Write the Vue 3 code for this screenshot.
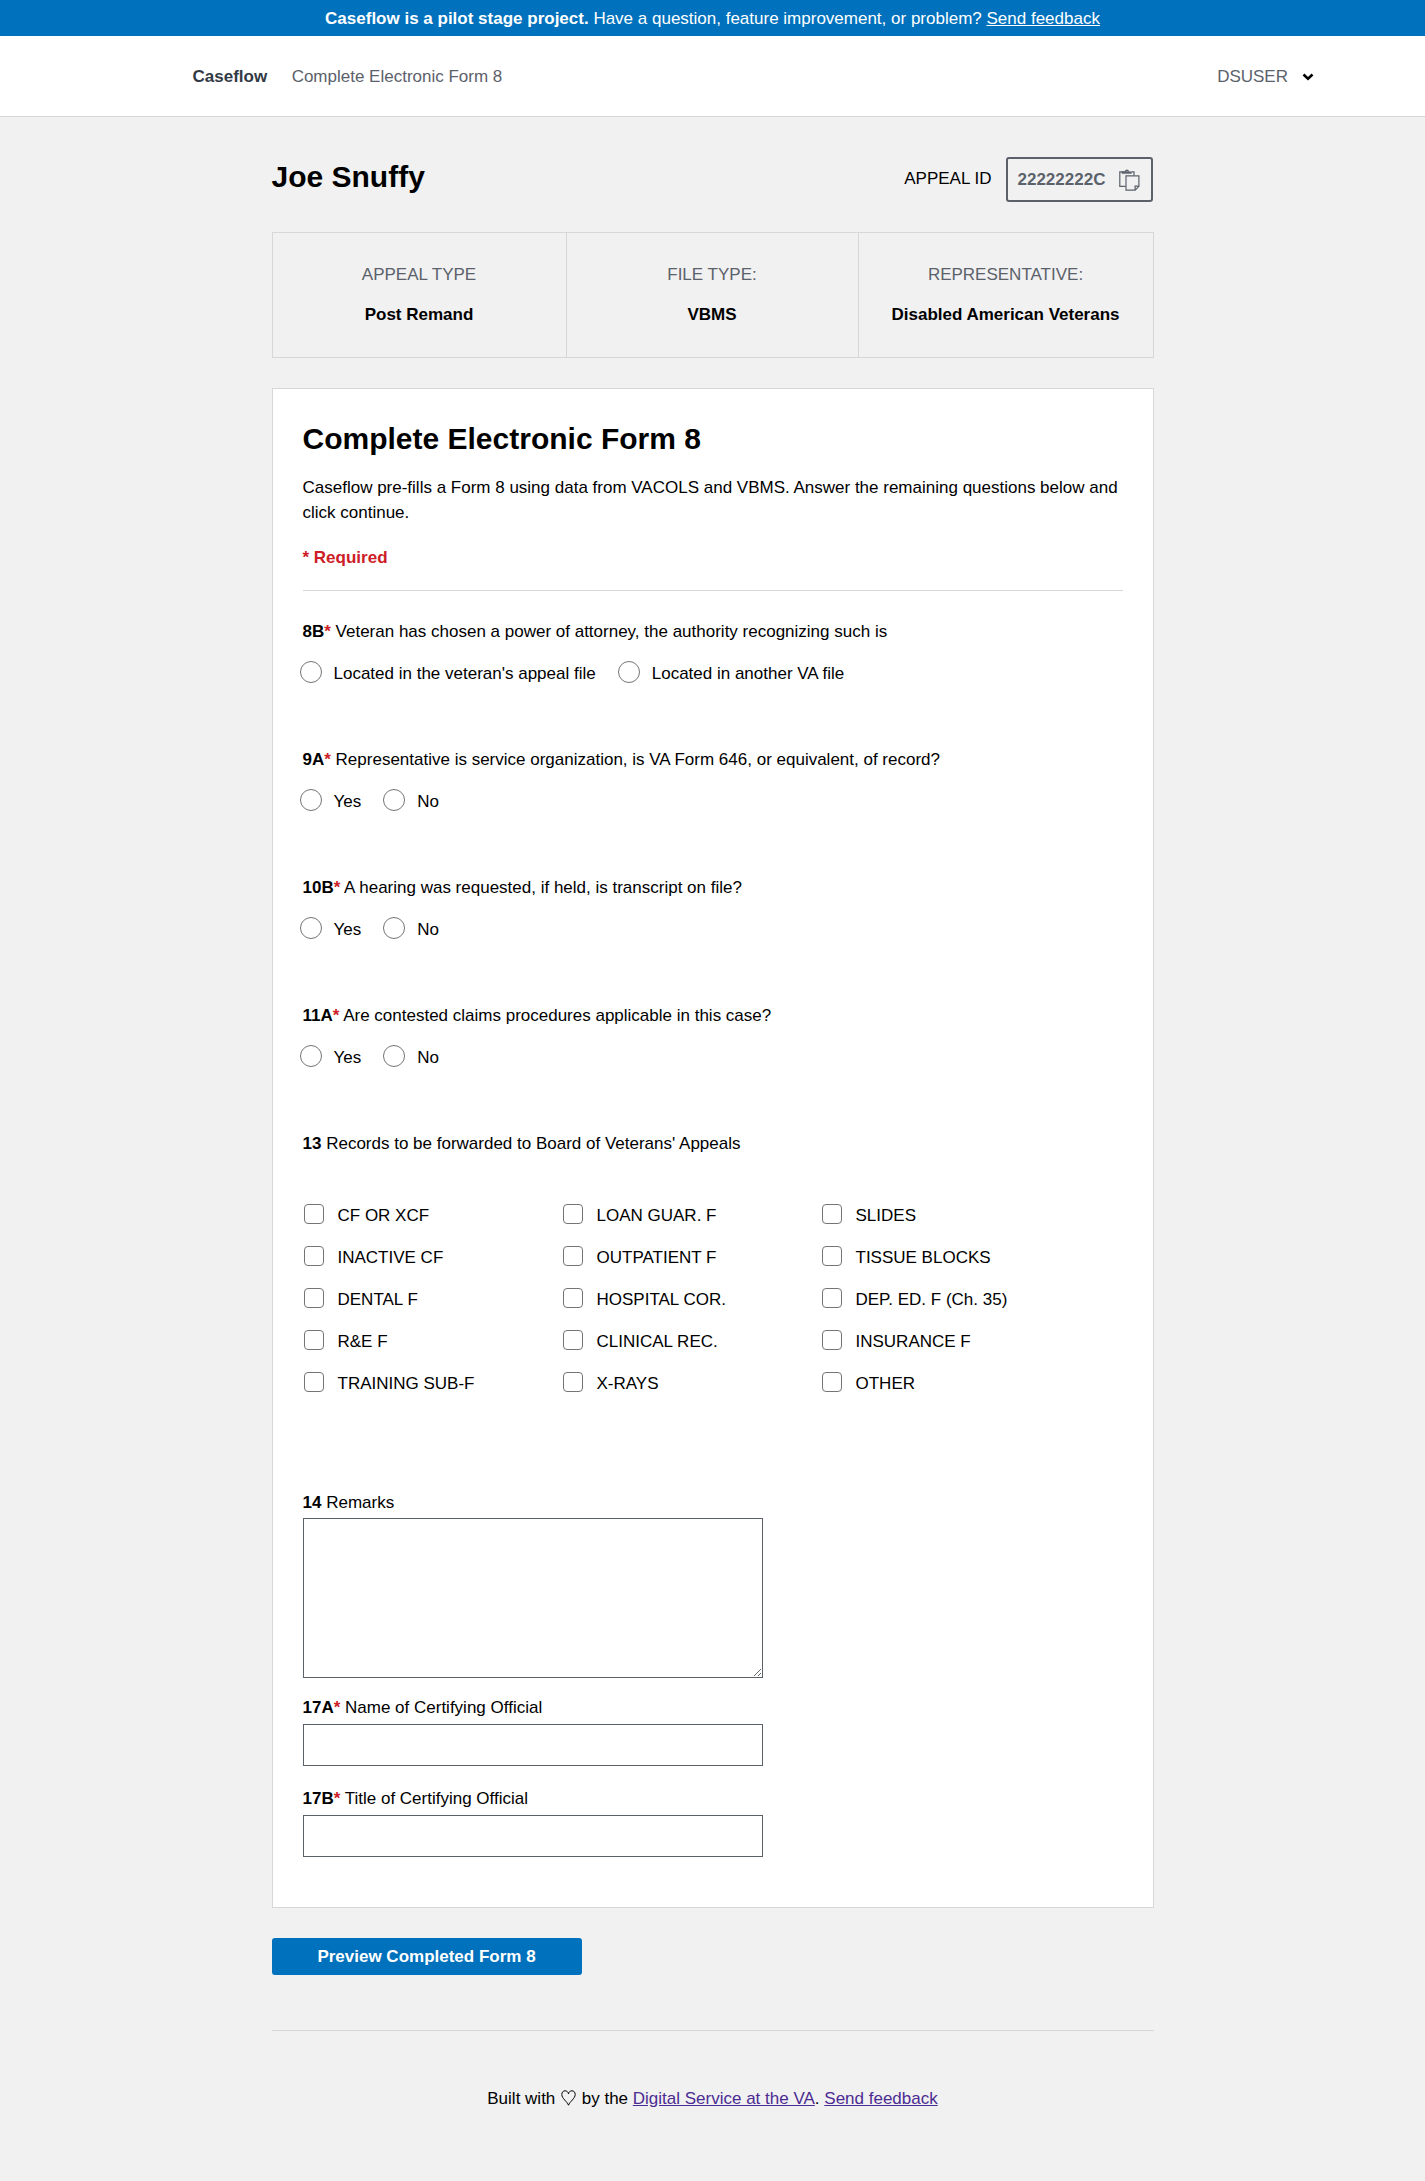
<script setup>
const summary = [
  { label: 'APPEAL TYPE', value: 'Post Remand' },
  { label: 'FILE TYPE:', value: 'VBMS' },
  { label: 'REPRESENTATIVE:', value: 'Disabled American Veterans' },
]
const questions = [
  { id: '8B', text: 'Veteran has chosen a power of attorney, the authority recognizing such is', options: ["Located in the veteran's appeal file", 'Located in another VA file'] },
  { id: '9A', text: 'Representative is service organization, is VA Form 646, or equivalent, of record?', options: ['Yes', 'No'] },
  { id: '10B', text: 'A hearing was requested, if held, is transcript on file?', options: ['Yes', 'No'] },
  { id: '11A', text: 'Are contested claims procedures applicable in this case?', options: ['Yes', 'No'] },
]
const records = [
  'CF OR XCF', 'INACTIVE CF', 'DENTAL F', 'R&E F', 'TRAINING SUB-F',
  'LOAN GUAR. F', 'OUTPATIENT F', 'HOSPITAL COR.', 'CLINICAL REC.', 'X-RAYS',
  'SLIDES', 'TISSUE BLOCKS', 'DEP. ED. F (Ch. 35)', 'INSURANCE F', 'OTHER',
]
</script>

<template>
  <div class="page">
    <div class="banner">
      <strong>Caseflow is a pilot stage project.</strong> Have a question, feature improvement, or problem? <a href="#">Send feedback</a>
    </div>
    <header class="header">
      <nav class="nav">
        <strong class="brand">Caseflow</strong>
        <span>Complete Electronic Form 8</span>
      </nav>
      <div class="user">
        <span>DSUSER</span>
        <svg width="12" height="8" viewBox="0 0 12 8"><path d="M1.500 1.500 6 5.700 10.500 1.500" fill="none" stroke="#000" stroke-width="2.500" /></svg>
      </div>
    </header>

    <main class="content">
      <div class="title-row">
        <h1>Joe Snuffy</h1>
        <div class="appeal">
          <span>APPEAL ID</span>
          <button class="copy" type="button">
            22222222C
            <svg width="21" height="22" viewBox="0 0 21 22" fill="none" stroke="#5b616b" stroke-width="1.2">
              <path d="M6.6 17.4H.8V2.8H3.4M12.4 2.8H15V6.6" />
              <path d="M3.2 4.600V2.800H5.600" />
              <path d="M3.400 4.600V2.700H5.800Q6 .800 7.900 .800T10 2.700H12.400V4.600ZM7.200 2.700H8.600V1.900H7.200Z" fill="#5b616b" fill-rule="evenodd" stroke-width=".4" />
              <path d="M7 6.9H19.9V17.3L16.2 21.2H7ZM19.9 17.2H16.1V21.2" />
            </svg>
          </button>
        </div>
      </div>

      <section class="summary">
        <div v-for="s in summary" :key="s.label" class="cell">
          <span class="cell-label">{{ s.label }}</span>
          <strong>{{ s.value }}</strong>
        </div>
      </section>

      <form class="card">
        <h1>Complete Electronic Form 8</h1>
        <p class="intro">Caseflow pre-fills a Form 8 using data from VACOLS and VBMS. Answer the remaining questions below and click continue.</p>
        <p class="required-note">* Required</p>
        <div class="rule"></div>

        <div v-for="q in questions" :key="q.id" class="question">
          <div class="q-label"><strong>{{ q.id }}<span class="star">*</span></strong> {{ q.text }}</div>
          <div class="options">
            <label v-for="o in q.options" :key="o"><input type="radio" :name="q.id">{{ o }}</label>
          </div>
        </div>

        <div class="q-label"><strong>13</strong> Records to be forwarded to Board of Veterans' Appeals</div>
        <div class="records">
          <label v-for="r in records" :key="r"><input type="checkbox">{{ r }}</label>
        </div>

        <div class="field remarks">
          <label for="remarks"><strong>14</strong> Remarks</label>
          <textarea id="remarks"></textarea>
        </div>
        <div class="field">
          <label for="name"><strong>17A<span class="star">*</span></strong> Name of Certifying Official</label>
          <input id="name" type="text">
        </div>
        <div class="field">
          <label for="title"><strong>17B<span class="star">*</span></strong> Title of Certifying Official</label>
          <input id="title" type="text">
        </div>
      </form>

      <button class="submit" type="button">Preview Completed Form 8</button>

      <footer class="footer">
        Built with
        <svg class="heart" width="15" height="16" viewBox="0 0 15 16"><path d="M7.5 15.2C6.3 11.6 .8 8.600 .8 4.400C.8 2.200 2.300 .8 4.100 .8C5.800 .8 7.100 1.900 7.500 3.900C7.900 1.900 9.200 .8 10.900 .8C12.700 .8 14.200 2.200 14.200 4.400C14.200 8.600 8.700 11.600 7.500 15.200Z" fill="none" stroke="#000" stroke-width="1" /></svg>
        by the <a href="#">Digital Service at the VA</a>. <a href="#">Send feedback</a>
      </footer>
    </main>
  </div>
</template>

<style>
body { margin: 0; background: #f1f1f1; }
</style>

<style scoped>
.page {
  box-sizing: border-box;
  min-height: 2181px;
  background: #f1f1f1;
  color: #000;
  font: 17px/25px "Liberation Sans", Arial, Helvetica, sans-serif;
}
.page * { box-sizing: border-box; }
.banner { height: 36px; padding-top: 6px; background: #0071bc; color: #fff; text-align: center; }
.banner a { color: #fff; }
.header {
  display: flex;
  justify-content: space-between;
  height: 81px;
  padding: 28px 111px 0 192.500px;
  background: #fff;
  border-bottom: 1px solid #d6d7d9;
  color: #5b616b;
}
.nav { display: flex; gap: 24.500px; }
.brand { color: #323a45; }
.user { display: flex; gap: 14px; }
.user svg { margin-top: 9px; }
.content { width: 882px; margin: 0 auto; padding-left: 0; }
h1 { margin: 0; font-size: 30px; line-height: 39px; font-weight: 700; }
.title-row { display: flex; justify-content: space-between; height: 115px; padding: 40px 1px 0 0; }
.appeal { display: flex; gap: 14px; line-height: 44px; }
.copy {
  display: flex;
  gap: 14px;
  width: 147px;
  height: 45px;
  padding: 8px 0 0 10px;
  border: 2px solid #5b616b;
  border-radius: 3px;
  background: transparent;
  color: #5b616b;
  font: 700 17px/25px "Liberation Sans", Arial, sans-serif;
}
.copy svg { margin-top: 2px; }
.summary { display: grid; grid-template-columns: 293px 292px 1fr; height: 126px; border: 1px solid #d6d7d9; }
.cell { display: flex; flex-direction: column; align-items: center; gap: 15px; padding-top: 29px; }
.cell + .cell { border-left: 1px solid #d6d7d9; }
.cell-label { color: #5b616b; }
.card { height: 1520px; margin-top: 30px; padding: 30px 30px 0; border: 1px solid #d6d7d9; background: #fff; }
.intro { margin: 17px 0 0; }
.required-note { margin: 20px 0 0; color: #cd2026; font-weight: 700; }
.rule { height: 1px; margin: 20px 0 28px; background: #d6d7d9; }
.star { color: #cd2026; }
.question { height: 128px; }
.options { display: flex; gap: 22px; margin: 17px 0 0 -3px; }
.options label { display: flex; gap: 12px; }
.options input { appearance: none; width: 22px; height: 22px; margin: 0; border: 1px solid #757575; border-radius: 50%; background: #fff; }
.records {
  display: grid;
  grid-template: repeat(5, 25px) / repeat(3, 259px);
  grid-auto-flow: column;
  row-gap: 17px;
  margin-top: 47px;
}
.records label { display: flex; gap: 14px; white-space: nowrap; }
.records input { appearance: none; width: 20px; height: 20px; margin: 1px 0 0 1px; border: 1px solid #757575; border-radius: 4px; background: #fff; }
.field { display: flex; flex-direction: column; width: 460px; height: 91px; }
.remarks { height: 205px; margin-top: 94px; }
.field textarea, .field input { width: 460px; margin: 4px 0 0; border: 1px solid #5b616b; border-radius: 0; background: #fff; }
.field textarea { height: 160px; margin-top: 3px; }
.field input { height: 42px; }
.submit {
  display: block;
  width: 310px;
  height: 37px;
  margin-top: 30px;
  padding: 0;
  border: 0;
  border-radius: 3px;
  background: #0071bc;
  color: #fff;
  font: 700 17px/36px "Liberation Sans", Arial, sans-serif;
}
.footer { margin-top: 55px; padding-top: 55px; border-top: 1px solid #d6d7d9; text-align: center; }
.footer a { color: #4c2c92; }
.heart { margin: 0 1px; vertical-align: -2px; }
</style>
